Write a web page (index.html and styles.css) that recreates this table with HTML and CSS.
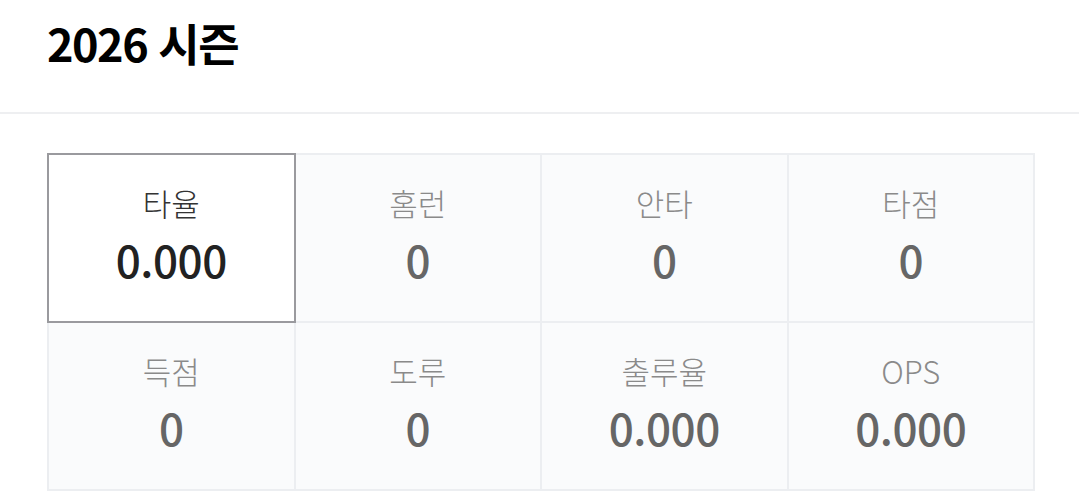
FILE: index.html
```html
<!DOCTYPE html>
<html lang="ko">
<head>
<meta charset="utf-8">
<link rel="stylesheet" href="styles.css">
</head>
<body>
<header class="season-header">
  <h1 class="season-title">2026 시즌</h1>
</header>
<section class="stats">
  <div class="stat-grid">
    <div class="stat is-active"><span class="stat-label">타율</span><span class="stat-value">0.000</span></div>
    <div class="stat"><span class="stat-label">홈런</span><span class="stat-value">0</span></div>
    <div class="stat"><span class="stat-label">안타</span><span class="stat-value">0</span></div>
    <div class="stat"><span class="stat-label">타점</span><span class="stat-value">0</span></div>
    <div class="stat"><span class="stat-label">득점</span><span class="stat-value">0</span></div>
    <div class="stat"><span class="stat-label">도루</span><span class="stat-value">0</span></div>
    <div class="stat"><span class="stat-label">출루율</span><span class="stat-value">0.000</span></div>
    <div class="stat"><span class="stat-label">OPS</span><span class="stat-value">0.000</span></div>
  </div>
</section>
</body>
</html>
```

FILE: styles.css
```css
html, body {
  margin: 0;
  padding: 0;
  background: #ffffff;
}

body {
  font-family: "Noto Sans CJK KR", "Noto Sans", sans-serif;
  color: #111;
}

.season-header {
  height: 114px;
  box-sizing: border-box;
  padding: 20px 0 0 47px;
  border-bottom: 2px solid #eeeff1;
}

.season-title {
  margin: 0;
  font-size: 45px;
  line-height: 1;
  font-weight: 700;
  letter-spacing: -1.5px;
  color: #000;
}

.stats {
  padding: 39px 0 0 47px;
}

.stat-grid {
  width: 988px;
  display: grid;
  grid-template-columns: repeat(4, 1fr);
  border: 1px solid #eceef1;
  box-sizing: border-box;
}

.stat {
  height: 168px;
  box-sizing: border-box;
  border: 1px solid #eceef1;
  background: #fafbfc;
  display: flex;
  flex-direction: column;
  align-items: center;
  justify-content: center;
  padding-bottom: 4px;
}

.stat.is-active {
  background: #ffffff;
  border-color: #9a9a9e;
  box-shadow: 0 0 0 1px #9a9a9e;
  position: relative;
  z-index: 1;
}

.stat-label {
  font-size: 31px;
  line-height: 40px;
  font-weight: 300;
  color: #8a8a8a;
}

.stat-value {
  margin-top: 6px;
  font-size: 44px;
  line-height: 60px;
  font-weight: 500;
  letter-spacing: -0.5px;
  color: #666666;
}

.stat.is-active .stat-label {
  color: #333333;
}

.stat.is-active .stat-value {
  color: #222222;
}
```
